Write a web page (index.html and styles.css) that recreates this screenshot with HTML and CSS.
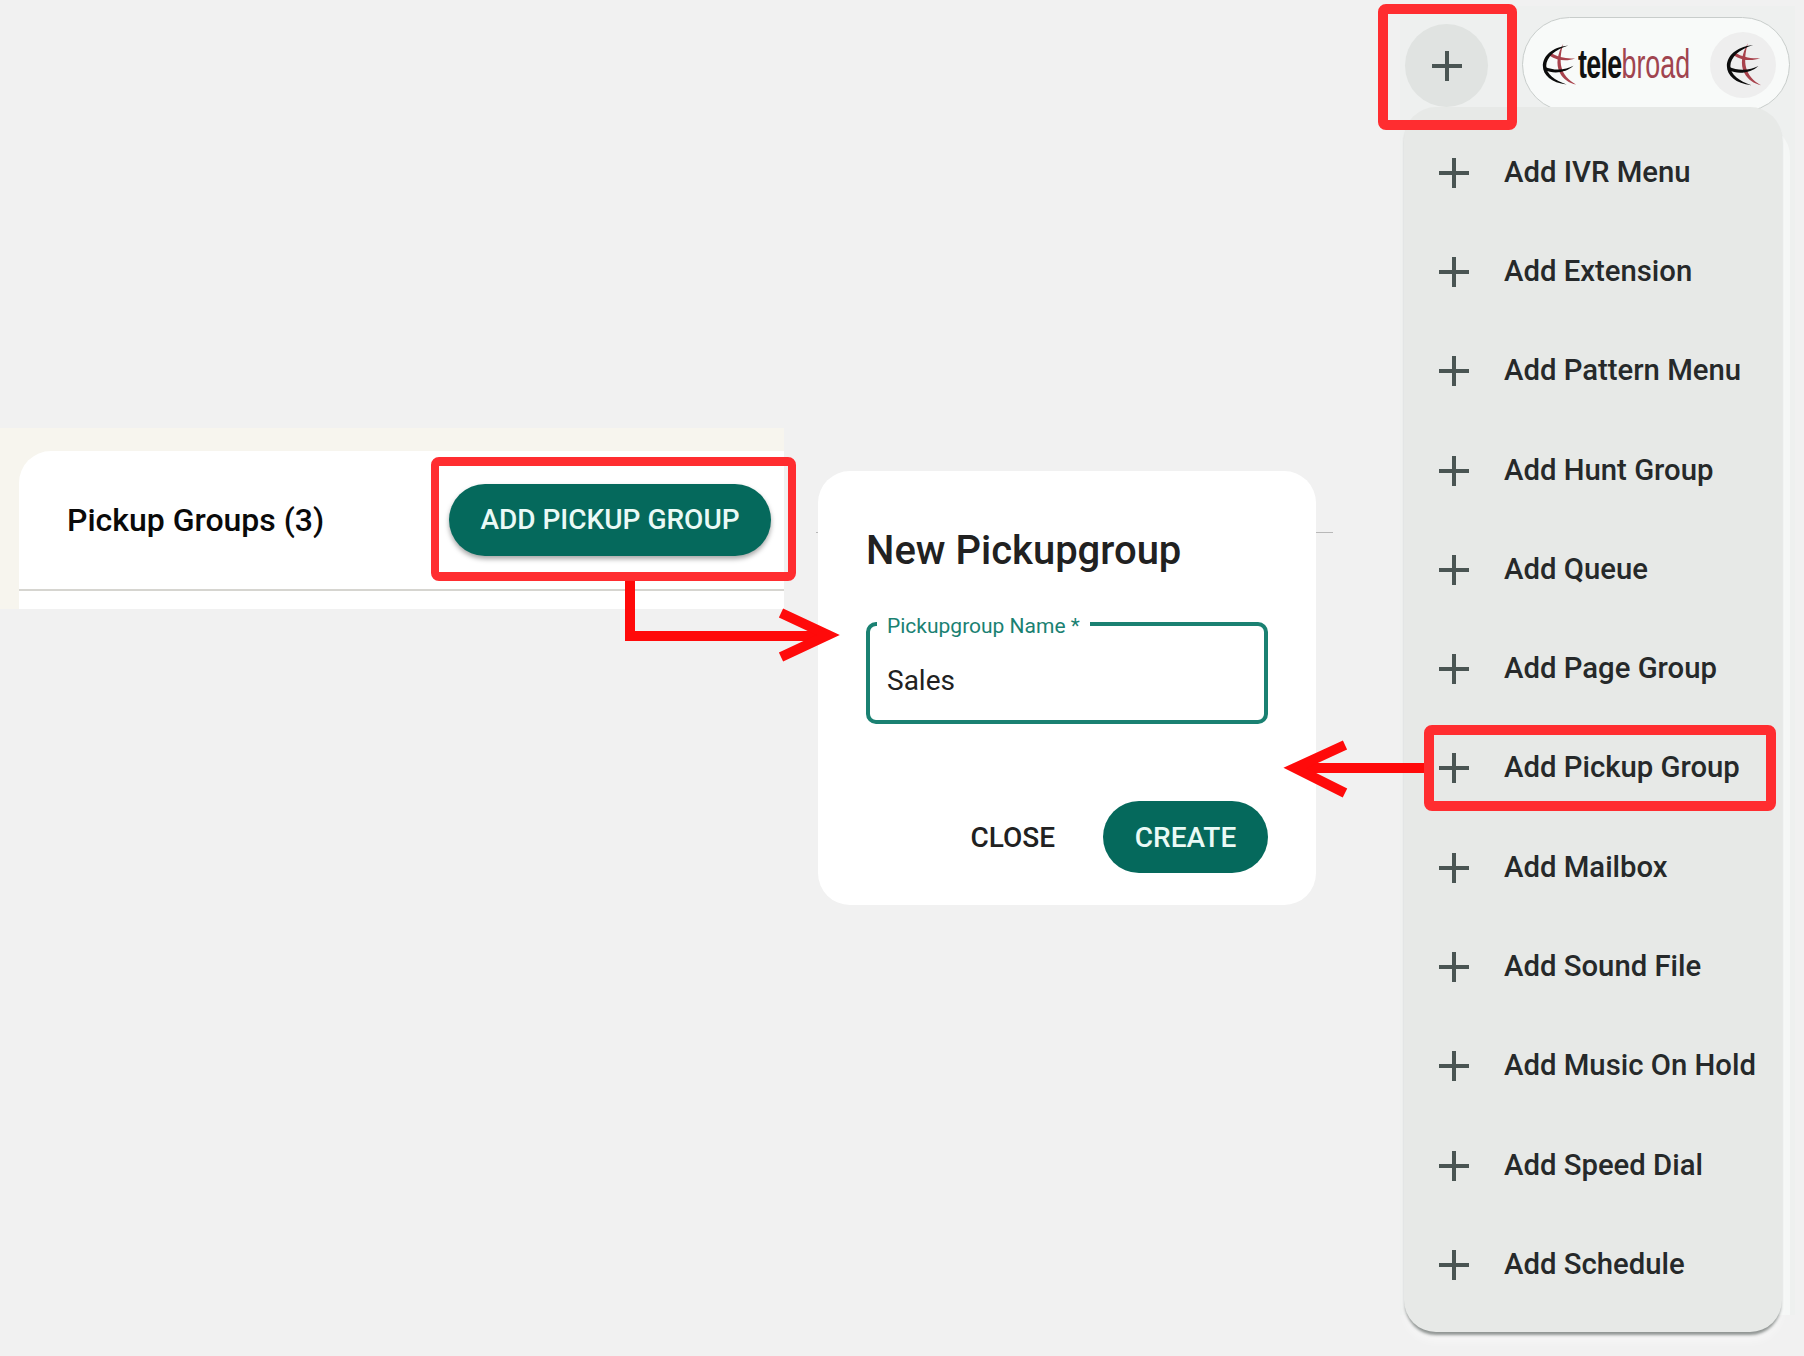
FILE: index.html
```html
<!DOCTYPE html>
<html lang="en">
<head>
<meta charset="utf-8">
<title>Add Pickup Group</title>
<link rel="stylesheet" href="styles.css">
</head>
<body>
<svg class="defs" width="0" height="0" aria-hidden="true">
  <symbol id="globe" viewBox="0 0 40 50">
    <path fill="#a8424c" d="M25 0C18 12 16 24 21 34C25 42 32 46 40 48C31 43 25 36 23 28C21 20 22 10 25 0Z"/>
    <path fill="#a8424c" d="M9 14C18 20 30 21 39 17C30 18 18 16 11 11Z"/>
    <path fill="#0c0c0c" d="M31 2C11 4 1 15 1 26C1 37 11 46 29 48C15 43 5 36 5 26C5 16 15 7 31 2Z"/>
    <path fill="#0c0c0c" d="M3 31C14 36 29 34 37 26C28 31 14 32 3 27Z"/>
  </symbol>
  <symbol id="plus" viewBox="0 0 30 30">
    <path d="M15 0V30M0 15H30" fill="none" stroke="currentColor" stroke-width="4"/>
  </symbol>
</svg>
<main class="canvas">
  <section class="list-shot">
    <div class="card">
      <header class="card-head">
        <h2 class="card-title">Pickup Groups (3)</h2>
        <button class="pill-btn add-btn" type="button">ADD PICKUP GROUP</button>
      </header>
    </div>
  </section>

  <section class="dialog">
    <h1 class="dialog-title">New Pickupgroup</h1>
    <fieldset class="field">
      <legend class="field-label">Pickupgroup Name *</legend>
      <span class="field-value">Sales</span>
    </fieldset>
    <footer class="dialog-actions">
      <button class="text-btn" type="button">CLOSE</button>
      <button class="pill-btn create-btn" type="button">CREATE</button>
    </footer>
  </section>

  <aside class="side">
    <div class="topbar">
      <div class="round-add"><svg class="plus"><use href="#plus"/></svg></div>
      <div class="account">
        <svg class="logo-globe"><use href="#globe"/></svg>
        <span class="wordmark"><b>tele</b><span class="broad">broad</span></span>
        <span class="avatar"><svg class="avatar-globe"><use href="#globe"/></svg></span>
      </div>
    </div>
    <ul class="menu">
      <li class="item"><svg class="plus"><use href="#plus"/></svg>Add IVR Menu</li>
      <li class="item"><svg class="plus"><use href="#plus"/></svg>Add Extension</li>
      <li class="item"><svg class="plus"><use href="#plus"/></svg>Add Pattern Menu</li>
      <li class="item"><svg class="plus"><use href="#plus"/></svg>Add Hunt Group</li>
      <li class="item"><svg class="plus"><use href="#plus"/></svg>Add Queue</li>
      <li class="item"><svg class="plus"><use href="#plus"/></svg>Add Page Group</li>
      <li class="item"><svg class="plus"><use href="#plus"/></svg>Add Pickup Group</li>
      <li class="item"><svg class="plus"><use href="#plus"/></svg>Add Mailbox</li>
      <li class="item"><svg class="plus"><use href="#plus"/></svg>Add Sound File</li>
      <li class="item"><svg class="plus"><use href="#plus"/></svg>Add Music On Hold</li>
      <li class="item"><svg class="plus"><use href="#plus"/></svg>Add Speed Dial</li>
      <li class="item"><svg class="plus"><use href="#plus"/></svg>Add Schedule</li>
    </ul>
  </aside>

  <div class="mark mark-round"></div>
  <div class="mark mark-add"></div>
  <div class="mark mark-item"></div>
  <svg class="arrows" viewBox="0 0 1804 1356" aria-hidden="true">
    <path d="M630 581V636H820" />
    <path d="M781 613L828 635L781 657" />
    <path d="M1424 768H1300" />
    <path d="M1345 745L1295 768L1345 793" />
  </svg>
</main>
</body>
</html>
```
FILE: styles.css
```css
* { box-sizing: border-box; }
html, body { margin: 0; height: 100%; }
body {
  background: #f1f1f1;
  font-family: Roboto, "Liberation Sans", sans-serif;
  color: #212121;
  overflow: hidden;
}
.defs { position: absolute; }
.canvas {
  position: relative;
  display: flex;
  align-items: flex-start;
  width: 1804px;
  height: 1356px;
}

/* left screenshot fragment */
.list-shot {
  flex: none;
  width: 784px;
  height: 181px;
  margin-top: 428px;
  padding: 23px 0 0 19px;
  background: #f7f5ee;
}
.card {
  height: 158px;
  background: #fff;
  border-top-left-radius: 32px;
}
.card-head {
  display: flex;
  align-items: center;
  justify-content: space-between;
  height: 140px;
  padding: 0 13px 1px 48px;
  border-bottom: 2px solid #d6d5d0;
}
.card-title {
  margin: 0;
  font-size: 32px;
  font-weight: 500;
  color: #0a0a0a;
}
.pill-btn {
  border: 0;
  border-radius: 36px;
  height: 72px;
  background: #05695c;
  color: #eafaf6;
  font: 500 28px Roboto, "Liberation Sans", sans-serif;
}
.add-btn {
  width: 322px;
  box-shadow: 0 3px 5px rgba(0, 0, 0, .35);
}

/* dialog */
.dialog {
  position: relative;
  flex: none;
  width: 498px;
  height: 434px;
  margin: 471px 0 0 34px;
  padding: 55px 48px 0;
  background: #fff;
  border-radius: 32px;
}
.dialog::before {
  content: "";
  position: absolute;
  z-index: -1;
  top: 61px;
  left: -2px;
  right: -17px;
  height: 1px;
  background: #b8b8b8;
}
.dialog-title {
  margin: 0;
  font-size: 40px;
  line-height: 50px;
  font-weight: 500;
}
.field {
  height: 110px;
  margin: 38px 0 0;
  padding: 0 17px;
  border: 4px solid #1a8172;
  border-radius: 10px;
}
.field-label {
  padding: 5px 10px 0;
  margin-left: -10px;
  font-size: 21px;
  line-height: 14px;
  color: #1a8172;
}
.field-value {
  display: block;
  margin-top: 32px;
  font-size: 28px;
  line-height: 32px;
}
.dialog-actions {
  display: flex;
  align-items: center;
  justify-content: flex-end;
  gap: 48px;
  margin-top: 77px;
}
.text-btn {
  border: 0;
  padding: 0;
  background: none;
  color: #212121;
  font: 500 28px Roboto, "Liberation Sans", sans-serif;
}
.create-btn { width: 165px; }

/* right column */
.side {
  position: relative;
  flex: none;
  width: 395px;
  height: 1309px;
  margin: 6px 0 0 84px;
  padding-top: 11px;
  background: #eef0ef;
}
.side::after {
  content: "";
  position: absolute;
  top: 120px;
  right: 5px;
  bottom: 0;
  width: 30px;
  border-top-right-radius: 30px;
  background: #f5f7f6;
}
.topbar {
  display: flex;
  align-items: flex-start;
  gap: 34px;
  padding-left: 5px;
}
.round-add {
  flex: none;
  display: flex;
  align-items: center;
  justify-content: center;
  width: 83px;
  height: 83px;
  margin-top: 7px;
  border-radius: 50%;
  background: #e0e3e1;
  color: #4a5553;
}
.plus {
  flex: none;
  width: 30px;
  height: 30px;
  color: #4a5553;
}
.account {
  flex: none;
  display: flex;
  align-items: center;
  width: 268px;
  height: 95px;
  padding: 0 14px 0 19px;
  background: #f8faf9;
  border: 1px solid #c8cdcb;
  border-radius: 48px;
}
.logo-globe {
  flex: none;
  width: 34px;
  height: 46px;
}
.wordmark {
  flex: none;
  width: 158px;
  margin-left: 2px;
  font: 400 40px "Liberation Sans", sans-serif;
  color: #111;
  transform: scaleX(.67);
  transform-origin: left center;
  white-space: nowrap;
}
.wordmark b { font-weight: 700; letter-spacing: -1px; }
.broad { color: #a0444f; }
.avatar {
  flex: none;
  display: flex;
  align-items: center;
  justify-content: center;
  width: 66px;
  height: 66px;
  margin-left: -26px;
  border-radius: 50%;
  background: #eeeeee;
}
.avatar-globe { width: 35px; height: 46px; }
.menu {
  position: relative;
  z-index: 1;
  width: 378px;
  height: 1225px;
  margin: -5px 0 0 4px;
  padding: 15px 0 0;
  list-style: none;
  background: #e7e9e7;
  border-radius: 32px;
  box-shadow: 0 4px 3px -1px rgba(60, 70, 65, .55), 0 10px 10px rgba(255, 255, 255, .4);
}
.item {
  display: flex;
  align-items: center;
  gap: 35px;
  height: 99.3px;
  padding-left: 35px;
  font-size: 29.3px;
  font-weight: 500;
  color: #26292a;
  white-space: nowrap;
}
.item .plus { margin-top: 2px; }

/* annotations */
.mark {
  position: absolute;
  z-index: 3;
  border: 10px solid #ff2d30;
  border-radius: 8px;
}
.mark-round { left: 1378px; top: 4px; width: 139px; height: 126px; }
.mark-add { left: 431px; top: 457px; width: 365px; height: 124px; border-width: 9px 8px; }
.mark-item { left: 1424px; top: 725px; width: 352px; height: 86px; }
.arrows {
  position: absolute;
  z-index: 2;
  left: 0;
  top: 0;
  width: 1804px;
  height: 1356px;
  pointer-events: none;
}
.arrows path {
  fill: none;
  stroke: #ff0a0a;
  stroke-width: 10;
}
```
